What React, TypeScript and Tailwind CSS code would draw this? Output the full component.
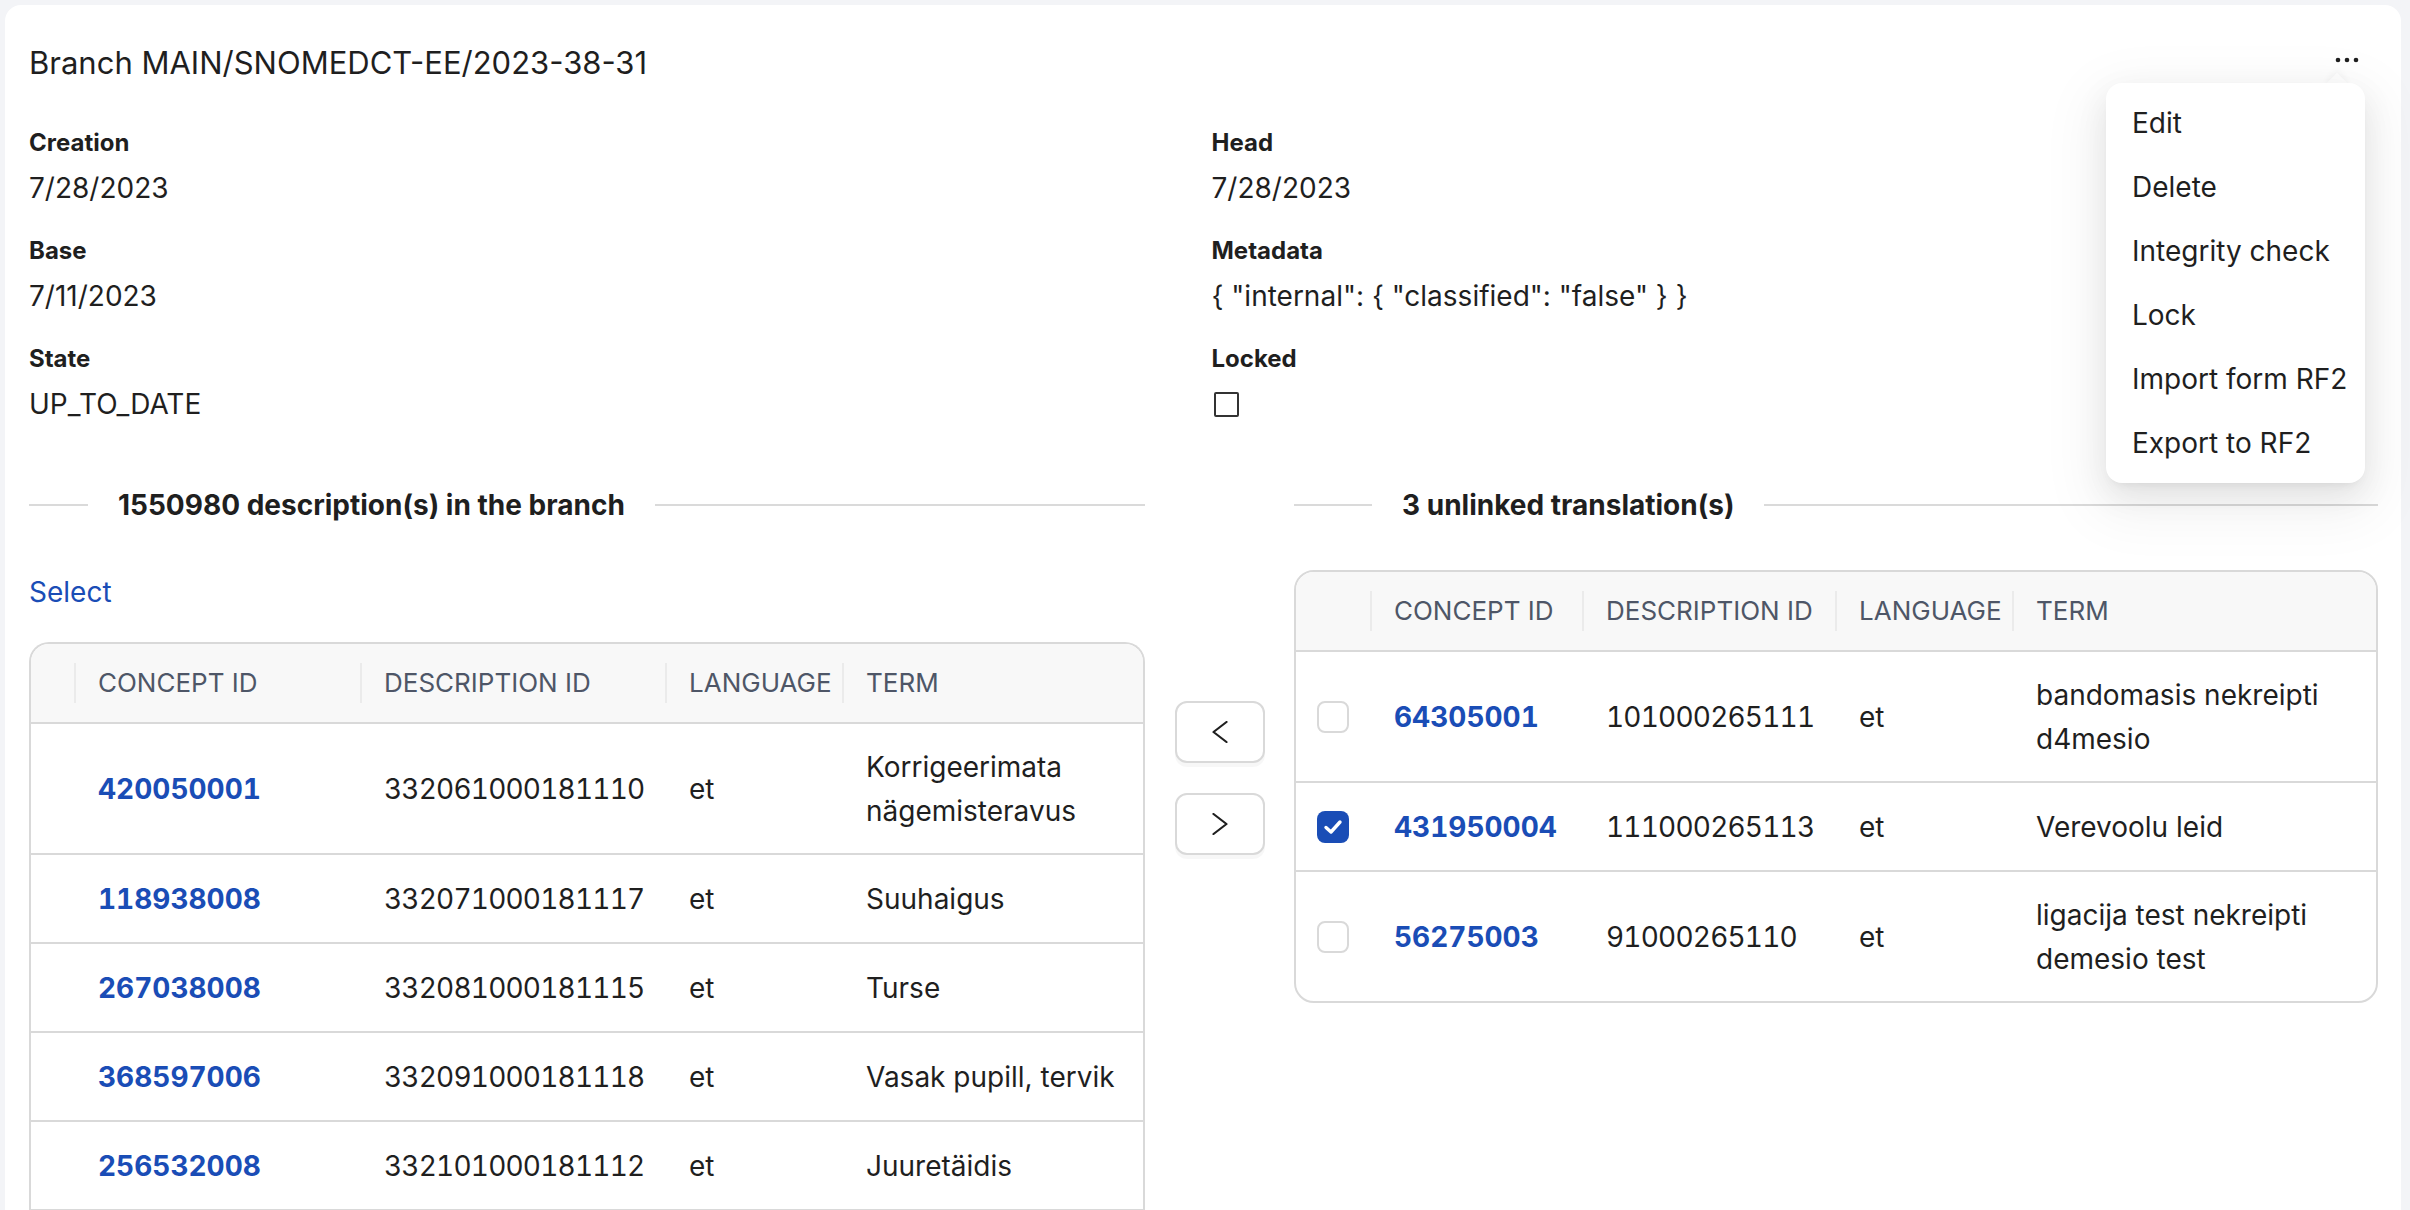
import React from "react";

const BLUE = "text-[#1a4db6]";

type Row = { concept: string; desc: string; lang: string; term: string; checked?: boolean };

const leftRows: Row[] = [
  { concept: "420050001", desc: "332061000181110", lang: "et", term: "Korrigeerimata nägemisteravus" },
  { concept: "118938008", desc: "332071000181117", lang: "et", term: "Suuhaigus" },
  { concept: "267038008", desc: "332081000181115", lang: "et", term: "Turse" },
  { concept: "368597006", desc: "332091000181118", lang: "et", term: "Vasak pupill, tervik" },
  { concept: "256532008", desc: "332101000181112", lang: "et", term: "Juuretäidis" },
];

const rightRows: Row[] = [
  { concept: "64305001", desc: "101000265111", lang: "et", term: "bandomasis nekreipti d4mesio", checked: false },
  { concept: "431950004", desc: "111000265113", lang: "et", term: "Verevoolu leid", checked: true },
  { concept: "56275003", desc: "91000265110", lang: "et", term: "ligacija test nekreipti demesio test", checked: false },
];

function Dots() {
  return (
    <svg width="24" height="6" viewBox="0 0 24 6" className="block">
      <circle cx="3" cy="3" r="2.3" fill="#1f1f1f" />
      <circle cx="12" cy="3" r="2.3" fill="#1f1f1f" />
      <circle cx="21" cy="3" r="2.3" fill="#1f1f1f" />
    </svg>
  );
}

function Chevron({ dir }: { dir: "left" | "right" }) {
  return (
    <svg width="16" height="22" viewBox="0 0 16 22" fill="none">
      {dir === "left" ? (
        <polyline points="14.5,1 1.5,11 14.5,21" stroke="#1f1f1f" strokeWidth="2.2" strokeLinejoin="round" strokeLinecap="round" />
      ) : (
        <polyline points="1.5,1 14.5,11 1.5,21" stroke="#1f1f1f" strokeWidth="2.2" strokeLinejoin="round" strokeLinecap="round" />
      )}
    </svg>
  );
}

function Checkbox({ checked }: { checked?: boolean }) {
  if (checked) {
    return (
      <div className="flex h-[32px] w-[32px] items-center justify-center rounded-[8px] bg-[#1a4db6]">
        <svg width="20" height="16" viewBox="0 0 20 16" fill="none">
          <polyline points="3,8.5 8,13 17,3" stroke="#ffffff" strokeWidth="3.4" strokeLinecap="round" strokeLinejoin="round" />
        </svg>
      </div>
    );
  }
  return <div className="h-[32px] w-[32px] rounded-[8px] border-2 border-[#d9d9d9] bg-white" />;
}

function Field({ label, children }: { label: string; children: React.ReactNode }) {
  return (
    <div className="flex flex-col">
      <div className="text-[24px] font-bold leading-[38px]">{label}</div>
      <div className="mt-[4px] flex h-[44px] items-center text-[28px] leading-[44px]">{children}</div>
    </div>
  );
}

function Divider({ text, lead }: { text: string; lead: string }) {
  return (
    <div className="flex h-[44px] items-center">
      <div className={`${lead} h-[2px] bg-[#dadada]`} />
      <div className="whitespace-nowrap px-[30px] text-[28px] font-bold leading-[44px]">{text}</div>
      <div className="h-[2px] flex-1 bg-[#dadada]" />
    </div>
  );
}

function HeaderCell({ label, sep = true }: { label?: string; sep?: boolean }) {
  return (
    <div className="flex h-full items-center">
      {sep && <div className="h-[40px] w-[2px] bg-[#ebebeb]" />}
      {label && <div className="ml-[22px] text-[26px] leading-[40px] text-[#4e5667]">{label}</div>}
    </div>
  );
}

function Table({
  rows,
  cols,
  selectable,
  cut,
}: {
  rows: Row[];
  cols: string;
  selectable?: boolean;
  cut?: boolean;
}) {
  return (
    <div
      className={
        cut
          ? "overflow-hidden rounded-t-[20px] border-2 border-b-0 border-[#d9d9d9]"
          : "overflow-hidden rounded-[20px] border-2 border-[#d9d9d9]"
      }
    >
      <div className={`grid h-[80px] border-b-2 border-[#d9d9d9] bg-[#f8f8f8] ${cols}`}>
        <div />
        <HeaderCell label="CONCEPT ID" />
        <HeaderCell label="DESCRIPTION ID" />
        <HeaderCell label="LANGUAGE" />
        <HeaderCell label="TERM" />
      </div>
      {rows.map((r, i) => {
        const last = !cut && i === rows.length - 1;
        return (
          <div
            key={r.concept}
            className={`grid items-center py-[20.5px] text-[28px] leading-[44px] ${cols} ${
              last ? "min-h-[87px]" : "min-h-[89px] border-b-2 border-[#d9d9d9]"
            }`}
          >
            <div className="flex justify-center">{selectable && <Checkbox checked={r.checked} />}</div>
            <div className={`pl-[24px] font-bold tabular-nums ${BLUE}`}>{r.concept}</div>
            <div className="pl-[24px] tabular-nums tracking-[-0.8px]">{r.desc}</div>
            <div className="pl-[24px]">{r.lang}</div>
            <div className="pl-[24px] pr-[24px]">{r.term}</div>
          </div>
        );
      })}
    </div>
  );
}

const menuItems = ["Edit", "Delete", "Integrity check", "Lock", "Import form RF2", "Export to RF2"];

export default function App() {
  return (
    <div className="h-[1210px] overflow-hidden bg-[#f3f4f7] pl-[5px] pr-[9px] pt-[5px] font-['Inter',sans-serif] text-[#1f1f1f]">
      <div className="relative min-h-[1300px] rounded-[16px] bg-white pl-[24px] pr-[23px] pt-[36px]">
        <div className="flex h-[44px] items-center justify-between">
          <h1 className="text-[31px] font-normal leading-[44px]">Branch MAIN/SNOMEDCT-EE/2023-38-31</h1>
          <div className="mr-[19px] mb-[6px]">
            <Dots />
          </div>
        </div>

        <div className="mt-[39px] grid grid-cols-2 gap-x-[16px] gap-y-[22px]">
          <Field label="Creation">7/28/2023</Field>
          <Field label="Head">7/28/2023</Field>
          <Field label="Base">7/11/2023</Field>
          <Field label="Metadata">{'{ "internal": { "classified": "false" } }'}</Field>
          <Field label="State">UP_TO_DATE</Field>
          <Field label="Locked">
            <div className="ml-[2px] h-[25px] w-[25px] rounded-[2px] border-[2.5px] border-[#333333] bg-white" />
          </Field>
        </div>

        <div className="mt-[57px] flex">
          <div className="w-[1116px]">
            <Divider text="1550980 description(s) in the branch" lead="w-[59px]" />
            <div className="mt-[43px] text-[28px] leading-[44px] text-[#1a4db6]">Select</div>
            <div className="mt-[28px]">
              <Table rows={leftRows} cols="grid-cols-[43px_286px_305px_177px_1fr]" cut />
            </div>
          </div>

          <div className="flex flex-1 flex-col items-center gap-[30px] pt-[218px]">
            <button className="flex h-[62px] w-[90px] items-center justify-center rounded-[12px] border-2 border-[#d9d9d9] bg-white shadow-[0_4px_0_rgba(0,0,0,0.03)]">
              <Chevron dir="left" />
            </button>
            <button className="flex h-[62px] w-[90px] items-center justify-center rounded-[12px] border-2 border-[#d9d9d9] bg-white shadow-[0_4px_0_rgba(0,0,0,0.03)]">
              <Chevron dir="right" />
            </button>
          </div>

          <div className="w-[1084px]">
            <Divider text="3 unlinked translation(s)" lead="w-[78px]" />
            <div className="mt-[43px]">
              <Table rows={rightRows} cols="grid-cols-[74px_212px_253px_177px_1fr]" selectable />
            </div>
          </div>
        </div>

        <div className="absolute right-[36px] top-[78px] w-[259px]">
          <div className="absolute right-[20px] top-[-7px] h-[16px] w-[16px] rotate-45 bg-white shadow-[-2px_-2px_6px_rgba(0,0,0,0.04)]" />
          <div className="relative rounded-[16px] bg-white p-[8px] shadow-[0_12px_32px_0_rgba(0,0,0,0.08),0_6px_12px_-8px_rgba(0,0,0,0.12),0_18px_56px_16px_rgba(0,0,0,0.05)]">
            {menuItems.map((m) => (
              <div key={m} className="flex h-[64px] items-center whitespace-nowrap rounded-[8px] px-[18px] text-[28px] leading-[44px]">
                {m}
              </div>
            ))}
          </div>
        </div>
      </div>
    </div>
  );
}
